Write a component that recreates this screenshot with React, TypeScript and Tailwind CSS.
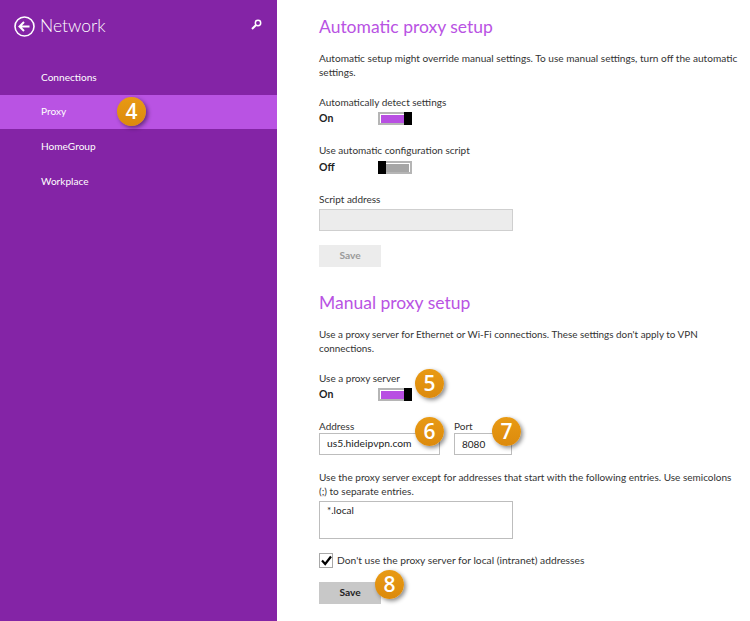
const navItems = ['Connections', 'Proxy', 'HomeGroup', 'Workplace'];

function Badge({ n, className }: { n: number; className: string }) {
  return (
    <span
      className={`absolute flex h-[29px] w-[29px] items-center justify-center rounded-full bg-gradient-to-b from-[#e89a14] to-[#dc8a0c] font-['Open_Sans',sans-serif] text-[21px] font-semibold leading-none text-white shadow-[2px_2px_4px_rgba(0,0,0,0.45)] ${className}`}
    >
      {n}
    </span>
  );
}

function Toggle({ on }: { on: boolean }) {
  return (
    <div className="ml-[49px] flex h-[13px] w-[34px] flex-none">
      {on ? (
        <>
          <div className="flex-1 border-2 border-r-0 border-[#b5b5b5] py-[0.5px] pl-[1px]">
            <div className="h-full bg-[#b84fe2]" />
          </div>
          <div className="w-[8px] bg-black" />
        </>
      ) : (
        <>
          <div className="w-[8px] bg-black" />
          <div className="flex-1 border-2 border-l-0 border-[#b5b5b5] py-[0.5px] pr-[1px]">
            <div className="h-full bg-[#a6a6a6]" />
          </div>
        </>
      )}
    </div>
  );
}

function ToggleRow({ state, on }: { state: string; on: boolean }) {
  return (
    <div className="flex h-[13px] items-center">
      <span className="w-[10px] flex-none text-[10.5px] font-bold text-[#222]">{state}</span>
      <Toggle on={on} />
    </div>
  );
}

export default function App() {
  return (
    <div className="flex h-[621px] w-[750px] overflow-hidden bg-white font-['Lato',sans-serif] text-[10px] text-[#333]">
      <aside className="relative h-full w-[277px] flex-none bg-[#8424a6] text-white">
        <div className="flex h-[52px] items-center pl-[14px] pr-[15px]">
          <svg width="21" height="21" viewBox="0 0 21 21" fill="none" stroke="white" className="flex-none">
            <circle cx="10.5" cy="10.5" r="9.5" strokeWidth="1.6" />
            <path d="M15.5 10.5H6M10 6l-4.5 4.5L10 15" strokeWidth="2" />
          </svg>
          <h1 className="ml-[5px] text-[17.5px] font-light leading-none">Network</h1>
          <svg width="11" height="11" viewBox="0 0 11 11" fill="none" stroke="white" className="mb-[3px] ml-auto">
            <circle cx="7" cy="4" r="2.7" strokeWidth="1.5" />
            <path d="M5 6L1 10" strokeWidth="2" />
          </svg>
        </div>
        <nav className="mt-[8px]">
          {navItems.map((item) => (
            <div
              key={item}
              className={`flex h-[34.7px] items-center pl-[41px] text-[10.1px] ${item === 'Proxy' ? 'bg-[#b953e3]' : ''}`}
            >
              {item}
            </div>
          ))}
        </nav>
        <Badge n={4} className="left-[117px] top-[97px]" />
      </aside>

      <main className="relative min-w-0 flex-1 pl-[42px] pt-[15px]">
        <h2 className="text-[17.5px] leading-[24px] text-[#b953e3]">Automatic proxy setup</h2>
        <p className="mt-[12px] whitespace-nowrap text-[10.1px] leading-[14px]">
          Automatic setup might override manual settings. To use manual settings, turn off the automatic
          <br />
          settings.
        </p>
        <div className="mt-[16px] leading-[14px]">Automatically detect settings</div>
        <div className="mt-[3px]">
          <ToggleRow state="On" on />
        </div>
        <div className="mt-[18px] leading-[14px]">Use automatic configuration script</div>
        <div className="mt-[4px]">
          <ToggleRow state="Off" on={false} />
        </div>
        <div className="mt-[18px] leading-[14px]">Script address</div>
        <div className="mt-[3px] h-[22px] w-[194px] border border-[#cfcfcf] bg-[#ececec]" />
        <div className="mt-[14px] flex h-[22px] w-[62px] items-center justify-center bg-[#ececec] text-[10.2px] font-bold text-[#9a9a9a]">
          Save
        </div>

        <h2 className="mt-[24px] text-[17.5px] leading-[24px] text-[#b953e3]">Manual proxy setup</h2>
        <p className="mt-[12px] whitespace-nowrap text-[9.9px] leading-[14px]">
          Use a proxy server for Ethernet or Wi-Fi connections. These settings don't apply to VPN
          <br />
          connections.
        </p>
        <div className="mt-[16px] leading-[14px]">Use a proxy server</div>
        <div className="mt-[3px]">
          <ToggleRow state="On" on />
        </div>
        <div className="mt-[19px] flex gap-[14px]">
          <div>
            <div className="leading-[13px]">Address</div>
            <div className="flex h-[22px] w-[121px] items-center border border-[#bdbdbd] pl-[7px] text-[10.3px] text-[#222]">us5.hideipvpn.com</div>
          </div>
          <div>
            <div className="leading-[13px]">Port</div>
            <div className="flex h-[22px] w-[58px] items-center border border-[#bdbdbd] pl-[7px] text-[#222]">8080</div>
          </div>
        </div>
        <p className="mt-[15px] whitespace-nowrap leading-[14px]">
          Use the proxy server except for addresses that start with the following entries. Use semicolons
          <br />
          (;) to separate entries.
        </p>
        <div className="mt-[3px] h-[38px] w-[194px] border border-[#bdbdbd] pl-[7px] pt-[1px] leading-[14px] text-[#222]">*.local</div>
        <div className="mt-[14px] flex h-[15px] items-center">
          <div className="flex h-[15px] w-[14px] items-center justify-center border border-[#a8a8a8]">
            <svg width="13" height="13" viewBox="0 0 13 13" fill="none" stroke="black" strokeWidth="2.2" className="flex-none">
              <path d="M2 6.5l3.2 3.5L11 2.5" />
            </svg>
          </div>
          <span className="ml-[4px] text-[10.25px]">Don't use the proxy server for local (intranet) addresses</span>
        </div>
        <div className="mt-[14px] flex h-[22px] w-[62px] items-center justify-center bg-[#c8c8c8] text-[10.2px] font-bold text-[#222]">
          Save
        </div>

        <Badge n={5} className="left-[138px] top-[369px]" />
        <Badge n={6} className="left-[138px] top-[417px]" />
        <Badge n={7} className="left-[215px] top-[417px]" />
        <Badge n={8} className="left-[98px] top-[570px]" />
      </main>
    </div>
  );
}
